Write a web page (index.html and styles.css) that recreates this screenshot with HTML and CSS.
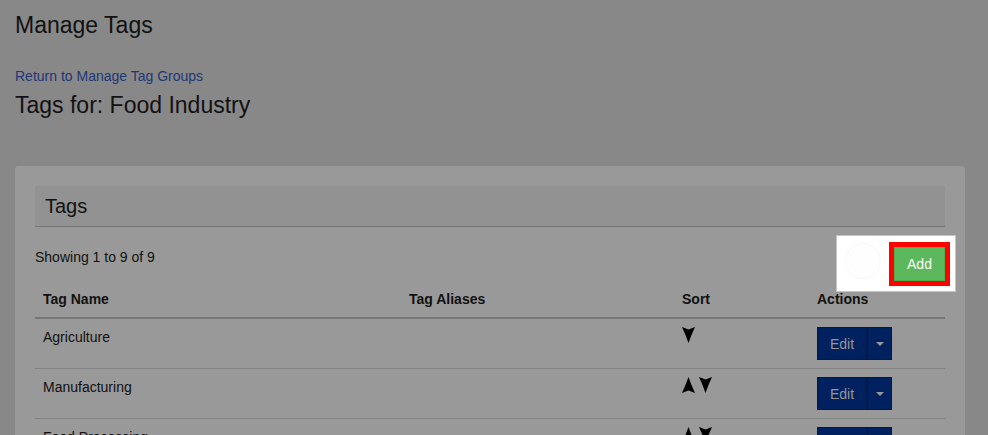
FILE: index.html
```html
<!DOCTYPE html>
<html lang="en">
<head>
<meta charset="UTF-8">
<meta name="viewport" content="width=device-width, initial-scale=1.0">
<title>Manage Tags</title>
<link rel="stylesheet" href="styles.css">
</head>
<body>
<h1 class="page-title">Manage Tags</h1>
<a class="back-link" href="#">Return to Manage Tag Groups</a>
<h2 class="group-title">Tags for: Food Industry</h2>

<div class="panel">
  <div class="panel-heading">Tags</div>

  <div class="toolbar">
    <span class="count">Showing 1 to 9 of 9</span>
    <!-- tour step highlight around the add button -->
    <span class="add-wrap">
      <span class="tour-highlight"><span class="tour-beacon"></span></span>
      <button class="btn-add">Add</button>
    </span>
  </div>

  <table class="tag-table">
    <colgroup>
      <col class="col-name">
      <col class="col-alias">
      <col class="col-sort">
      <col class="col-actions">
    </colgroup>
    <thead>
      <tr>
        <th>Tag Name</th>
        <th>Tag Aliases</th>
        <th>Sort</th>
        <th>Actions</th>
      </tr>
    </thead>
    <tbody>
      <tr>
        <td>Agriculture</td>
        <td></td>
        <td>
          <span class="sort">
            <svg class="arrow" width="13" height="16" viewBox="0 0 13 16"><path d="M0 0 L6.5 2.5 L13 0 L9.5 8 L6.5 16 L3.5 8 Z"/></svg>
          </span>
        </td>
        <td>
          <span class="btn-group"><button class="btn-edit">Edit</button><button class="btn-caret"><span class="caret"></span></button></span>
        </td>
      </tr>
      <tr>
        <td>Manufacturing</td>
        <td></td>
        <td>
          <span class="sort">
            <svg class="arrow" width="13" height="16" viewBox="0 0 13 16"><path d="M6.5 0 L9.5 8 L13 16 L6.5 13.5 L0 16 L3.5 8 Z"/></svg>
            <svg class="arrow" width="13" height="16" viewBox="0 0 13 16"><path d="M0 0 L6.5 2.5 L13 0 L9.5 8 L6.5 16 L3.5 8 Z"/></svg>
          </span>
        </td>
        <td>
          <span class="btn-group"><button class="btn-edit">Edit</button><button class="btn-caret"><span class="caret"></span></button></span>
        </td>
      </tr>
      <tr>
        <td>Food Processing</td>
        <td></td>
        <td>
          <span class="sort">
            <svg class="arrow" width="13" height="16" viewBox="0 0 13 16"><path d="M6.5 0 L9.5 8 L13 16 L6.5 13.5 L0 16 L3.5 8 Z"/></svg>
            <svg class="arrow" width="13" height="16" viewBox="0 0 13 16"><path d="M0 0 L6.5 2.5 L13 0 L9.5 8 L6.5 16 L3.5 8 Z"/></svg>
          </span>
        </td>
        <td>
          <span class="btn-group"><button class="btn-edit">Edit</button><button class="btn-caret"><span class="caret"></span></button></span>
        </td>
      </tr>
      <tr>
        <td>Distribution</td>
        <td></td>
        <td>
          <span class="sort">
            <svg class="arrow" width="13" height="16" viewBox="0 0 13 16"><path d="M6.5 0 L9.5 8 L13 16 L6.5 13.5 L0 16 L3.5 8 Z"/></svg>
            <svg class="arrow" width="13" height="16" viewBox="0 0 13 16"><path d="M0 0 L6.5 2.5 L13 0 L9.5 8 L6.5 16 L3.5 8 Z"/></svg>
          </span>
        </td>
        <td>
          <span class="btn-group"><button class="btn-edit">Edit</button><button class="btn-caret"><span class="caret"></span></button></span>
        </td>
      </tr>
    </tbody>
  </table>
</div>
</body>
</html>
```

FILE: styles.css
```css
:root {
  --page-bg: #888888;
  --panel-bg: #999999;
  --heading-bg: #929292;
  --text-color: #111111;
  --link-color: #1e3775;
  --navy: #00215f;
}

body {
  margin: 0;
  padding: 12px 23px 0 15px;
  background: var(--page-bg);
  color: var(--text-color);
  font-family: "Liberation Sans", Arial, sans-serif;
  overflow: hidden;
}

.page-title,
.group-title {
  margin: 0;
  font-size: 23px;
  font-weight: normal;
  line-height: 26px;
}

.back-link {
  display: block;
  margin-top: 28px;
  font-size: 14px;
  line-height: 20px;
  color: var(--link-color);
  text-decoration: none;
}

.group-title {
  margin-top: 6px;
}

.panel {
  margin-top: 48px;
  padding: 20px;
  background: var(--panel-bg);
  border-radius: 4px;
}

.panel-heading {
  height: 40px;
  padding: 0 10px;
  line-height: 40px;
  font-size: 20px;
  background: var(--heading-bg);
  border-bottom: 1px solid #777;
}

.toolbar {
  display: flex;
  justify-content: space-between;
  align-items: flex-start;
  margin-top: 20px;
}

.count {
  font-size: 14px;
  line-height: 20px;
}

.add-wrap {
  position: relative;
  display: block;
}

/* white tour box sitting over the toolbar */
.tour-highlight {
  position: absolute;
  top: -12px;
  left: -58px;
  right: -11px;
  bottom: -11px;
  background: #fff;
  border: 1px solid #c4c4c4;
  box-sizing: border-box;
}

.tour-beacon {
  position: absolute;
  top: 7px;
  left: 8px;
  width: 34px;
  height: 34px;
  border-radius: 50%;
  border: 1px solid #f8f8f8;
  background: #fefefe;
}

.btn-add {
  position: relative;
  display: block;
  width: 51px;
  height: 34px;
  padding: 0;
  border: 1px solid #4cae4c;
  background: #5cb85c;
  color: #fff;
  font-family: inherit;
  font-size: 14px;
  box-shadow: 0 0 0 5px #ff0000;
  cursor: pointer;
}

.tag-table {
  width: 100%;
  border-collapse: separate;
  border-spacing: 0;
  table-layout: fixed;
  font-size: 14px;
  line-height: 20px;
}

.col-name { width: 366px; }
.col-alias { width: 273px; }
.col-sort { width: 135px; }

.tag-table th {
  padding: 8px;
  text-align: left;
  font-weight: bold;
  border-bottom: 2px solid #777;
}

.tag-table td {
  padding: 8px;
  vertical-align: top;
  border-bottom: 1px solid #838383;
}

.sort {
  display: inline-flex;
  gap: 4px;
}

.arrow {
  display: block;
  fill: #000;
}

.btn-group {
  display: inline-flex;
  height: 33px;
}

.btn-edit,
.btn-caret {
  height: 33px;
  padding: 0;
  border: 1px solid #001a4f;
  background: var(--navy);
  color: #979797;
  font-family: inherit;
  font-size: 14px;
  cursor: pointer;
}

.btn-edit {
  width: 50px;
}

.btn-caret {
  width: 25px;
  border-left: 1px solid #00163f;
  display: flex;
  align-items: center;
  justify-content: center;
}

.caret {
  width: 0;
  height: 0;
  border-left: 4px solid transparent;
  border-right: 4px solid transparent;
  border-top: 4px solid #9a9a9a;
}
```
